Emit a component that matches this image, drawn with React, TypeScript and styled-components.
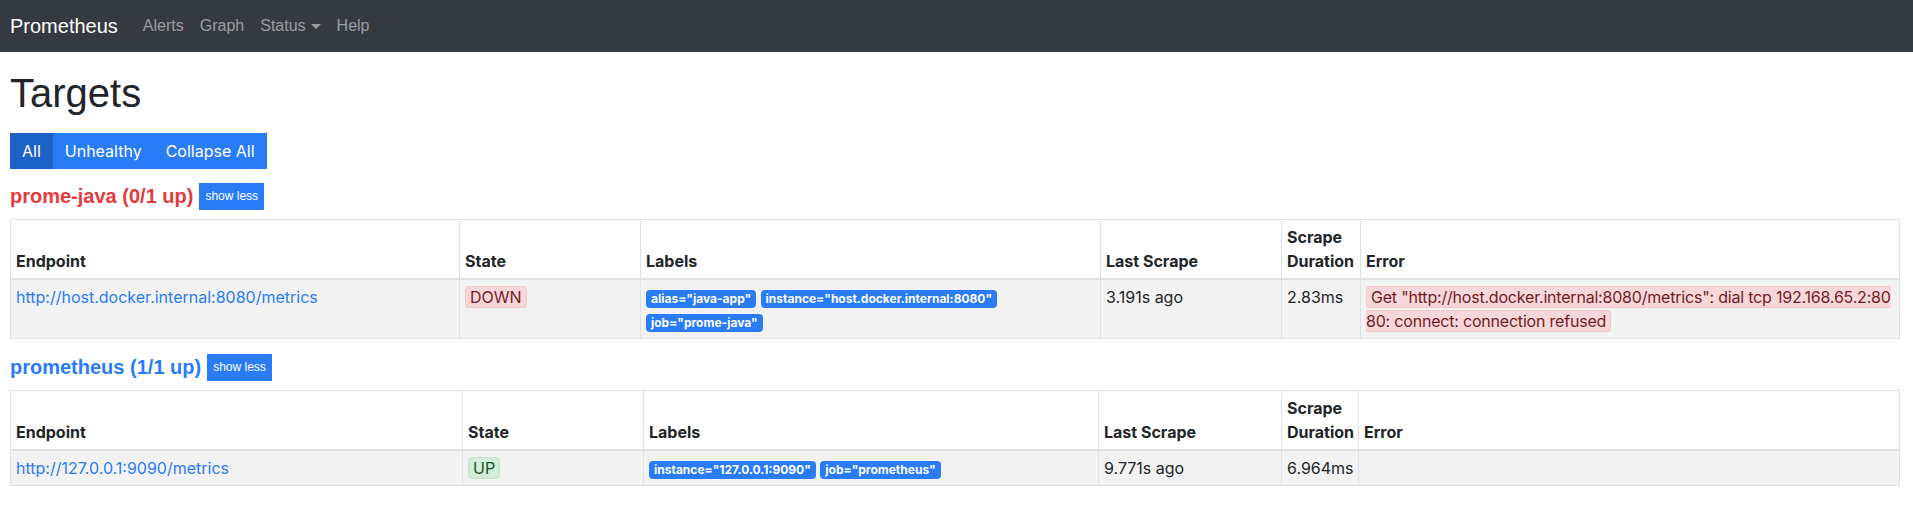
import styled, { createGlobalStyle } from 'styled-components';

const GlobalStyle = createGlobalStyle`
  * {
    box-sizing: border-box;
  }
  body {
    margin: 0;
    font-family: Inter, "Liberation Sans", Arial, sans-serif;
    font-size: 16px;
    line-height: 1.5;
    color: #212529;
    background-color: #fff;
  }
`;

const primary = '#2a7cf6';
const danger = '#e8393e';
const arial = '"Liberation Sans", Arial, sans-serif';

const Navbar = styled.nav`
  height: 52px;
  padding: 0 10px;
  background-color: #343a40;
  display: flex;
  align-items: center;
  font-family: ${arial};
`;

const Brand = styled.a`
  font-size: 20px;
  color: #fff;
  margin-right: 17px;
  text-decoration: none;
`;

const NavLink = styled.a`
  padding: 0 8px;
  font-size: 16px;
  color: rgba(255, 255, 255, 0.5);
  text-decoration: none;
  display: flex;
  align-items: center;
`;

const Caret = styled.span`
  margin-left: 5px;
  border-top: 5px solid rgba(255, 255, 255, 0.5);
  border-left: 5px solid transparent;
  border-right: 5px solid transparent;
`;

const Main = styled.main`
  padding: 0 14px 0 10px;
`;

const Title = styled.h1`
  font-family: ${arial};
  font-size: 40px;
  font-weight: 500;
  line-height: 1.2;
  margin: 17px 0 16px;
`;

const ButtonGroup = styled.div`
  display: inline-flex;
  margin-bottom: 12px;
`;

const FilterButton = styled.button<{ $active?: boolean }>`
  font-family: inherit;
  font-size: 16px;
  line-height: 24px;
  padding: 6px 12px;
  border: 0;
  border-radius: 0;
  color: #fff;
  background-color: ${(props) => (props.$active ? '#1d62c6' : primary)};
`;

const PoolHeader = styled.h2`
  height: 30px;
  margin: 0 0 8px;
  display: flex;
  align-items: center;
  gap: 6px;
  font-family: ${arial};
  font-size: 20px;
  font-weight: 700;
`;

const PoolLink = styled.a<{ $healthy: boolean }>`
  color: ${(props) => (props.$healthy ? primary : danger)};
  text-decoration: none;
`;

const ToggleButton = styled.button`
  font-family: ${arial};
  font-size: 12px;
  font-weight: 400;
  line-height: 17px;
  padding: 4px 5px;
  border: 1px solid ${primary};
  border-radius: 0;
  color: #fff;
  background-color: ${primary};
`;

const Table = styled.table`
  width: 100%;
  table-layout: fixed;
  border-collapse: collapse;
  margin-bottom: 13px;
`;

const Col = styled.col<{ $width: number }>`
  width: ${(props) => props.$width}px;
`;

const Th = styled.th`
  padding: 5px;
  border: 1px solid #dee2e6;
  border-bottom-width: 2px;
  text-align: left;
  vertical-align: bottom;
  font-weight: 700;
`;

const Row = styled.tr`
  background-color: #f2f2f2;
`;

const Td = styled.td`
  padding: 5px;
  border: 1px solid #dee2e6;
  vertical-align: top;
`;

const EndpointLink = styled.a`
  color: ${primary};
  text-decoration: none;
`;

const StateBadge = styled.span<{ $up: boolean }>`
  padding: 0 4px;
  border: 1px solid ${(props) => (props.$up ? '#c3e6cb' : '#f5c6cb')};
  border-radius: 4px;
  color: ${(props) => (props.$up ? '#155724' : '#721c24')};
  background-color: ${(props) => (props.$up ? '#d4edda' : '#f8d7da')};
`;

const ErrorText = styled(StateBadge)`
  word-break: break-all;
  letter-spacing: -0.2px;
`;

const LabelBadge = styled.span`
  display: inline-block;
  padding: 3px 5px;
  font-size: 12px;
  font-weight: 700;
  line-height: 1;
  border-radius: 4px;
  color: #fff;
  background-color: ${primary};
`;

interface ITarget {
  endpoint: string;
  up: boolean;
  labels: string[];
  lastScrape: string;
  duration: string;
  error?: string;
}

interface IPool {
  name: string;
  cols: number[];
  targets: ITarget[];
}

const pools: IPool[] = [
  {
    name: 'prome-java',
    cols: [449, 181, 460, 181, 79, 539],
    targets: [
      {
        endpoint: 'http://host.docker.internal:8080/metrics',
        up: false,
        labels: ['alias="java-app"', 'instance="host.docker.internal:8080"', 'job="prome-java"'],
        lastScrape: '3.191s ago',
        duration: '2.83ms',
        error: 'Get "http://host.docker.internal:8080/metrics": dial tcp 192.168.65.2:8080: connect: connection refused',
      },
    ],
  },
  {
    name: 'prometheus',
    cols: [452, 181, 455, 183, 77, 541],
    targets: [
      {
        endpoint: 'http://127.0.0.1:9090/metrics',
        up: true,
        labels: ['instance="127.0.0.1:9090"', 'job="prometheus"'],
        lastScrape: '9.771s ago',
        duration: '6.964ms',
      },
    ],
  },
];

function Pool({ pool }: { pool: IPool }) {
  const upCount = pool.targets.filter((t) => t.up).length;
  const healthy = upCount === pool.targets.length;
  return (
    <section>
      <PoolHeader>
        <PoolLink href={`#job-${pool.name}`} $healthy={healthy}>
          {pool.name} ({upCount}/{pool.targets.length} up)
        </PoolLink>
        <ToggleButton>show less</ToggleButton>
      </PoolHeader>
      <Table>
        <colgroup>
          {pool.cols.map((w, i) => (
            <Col key={i} $width={w} />
          ))}
        </colgroup>
        <thead>
          <tr>
            <Th>Endpoint</Th>
            <Th>State</Th>
            <Th>Labels</Th>
            <Th>Last Scrape</Th>
            <Th>Scrape Duration</Th>
            <Th>Error</Th>
          </tr>
        </thead>
        <tbody>
          {pool.targets.map((t) => (
            <Row key={t.endpoint}>
              <Td>
                <EndpointLink href={t.endpoint}>{t.endpoint}</EndpointLink>
              </Td>
              <Td>
                <StateBadge $up={t.up}>{t.up ? 'UP' : 'DOWN'}</StateBadge>
              </Td>
              <Td>
                {t.labels.map((l) => (
                  <span key={l}>
                    <LabelBadge>{l}</LabelBadge>{' '}
                  </span>
                ))}
              </Td>
              <Td>{t.lastScrape}</Td>
              <Td>{t.duration}</Td>
              <Td>{t.error && <ErrorText $up={false}>{t.error}</ErrorText>}</Td>
            </Row>
          ))}
        </tbody>
      </Table>
    </section>
  );
}

function App() {
  return (
    <>
      <GlobalStyle />
      <Navbar>
        <Brand href="#">Prometheus</Brand>
        <NavLink href="#">Alerts</NavLink>
        <NavLink href="#">Graph</NavLink>
        <NavLink href="#">
          Status<Caret />
        </NavLink>
        <NavLink href="#">Help</NavLink>
      </Navbar>
      <Main>
        <Title>Targets</Title>
        <ButtonGroup>
          <FilterButton $active>All</FilterButton>
          <FilterButton>Unhealthy</FilterButton>
          <FilterButton>Collapse All</FilterButton>
        </ButtonGroup>
        {pools.map((p) => (
          <Pool key={p.name} pool={p} />
        ))}
      </Main>
    </>
  );
}

export default App;
